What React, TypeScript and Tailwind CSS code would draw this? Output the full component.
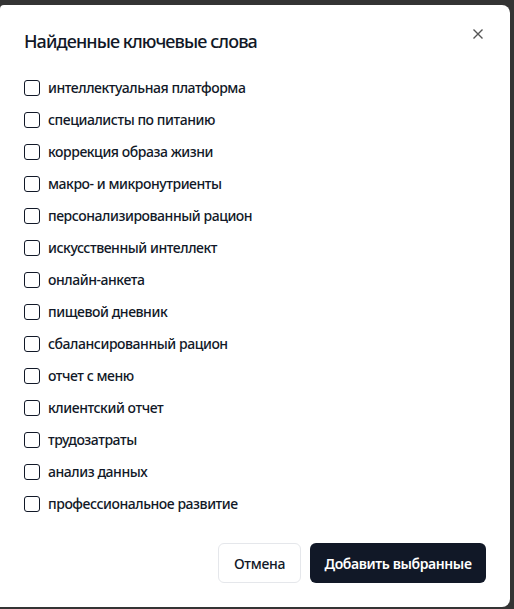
const keywords = [
  'интеллектуальная платформа',
  'специалисты по питанию',
  'коррекция образа жизни',
  'макро- и микронутриенты',
  'персонализированный рацион',
  'искусственный интеллект',
  'онлайн-анкета',
  'пищевой дневник',
  'сбалансированный рацион',
  'отчет с меню',
  'клиентский отчет',
  'трудозатраты',
  'анализ данных',
  'профессиональное развитие',
];

export default function App() {
  return (
    <div
      className="w-[514px] h-[609px] bg-[#343434] pt-[5px] overflow-hidden"
      style={{ fontFamily: '"Noto Sans", "Open Sans", sans-serif' }}
    >
      <div className="relative w-[510px] h-[602px] bg-white rounded-r-lg rounded-tl-sm px-6 pt-[22px] pb-6 flex flex-col">
        <button className="absolute right-[22px] top-[19px] text-[#555] p-1">
          <svg width="12" height="12" viewBox="0 0 12 12" fill="none" stroke="currentColor" strokeWidth="1.4">
            <path d="M1.5 1.5l9 9M10.5 1.5l-9 9" />
          </svg>
        </button>
        <h2 className="text-[18px] leading-7 font-medium text-[#111827] tracking-[-0.9px]">Найденные ключевые слова</h2>
        <div className="mt-[23px] flex flex-col gap-3">
          {keywords.map((k) => (
            <label key={k} className="flex items-center gap-2 h-5">
              <span className="w-4 h-4 rounded-[3px] border border-[#111827] shrink-0" />
              <span className="text-[14px] font-medium text-[#111827] leading-5 tracking-[-0.45px]">{k}</span>
            </label>
          ))}
        </div>
        <div className="mt-auto flex justify-end gap-[9px]">
          <button className="h-10 w-[83px] rounded-md border border-[#e5e7eb] bg-white text-[14px] font-medium text-[#111827] tracking-[-0.3px]">
            Отмена
          </button>
          <button className="h-10 w-[176px] rounded-md bg-[#111827] text-[14px] font-semibold text-white tracking-[-0.4px]">
            Добавить выбранные
          </button>
        </div>
      </div>
    </div>
  );
}
